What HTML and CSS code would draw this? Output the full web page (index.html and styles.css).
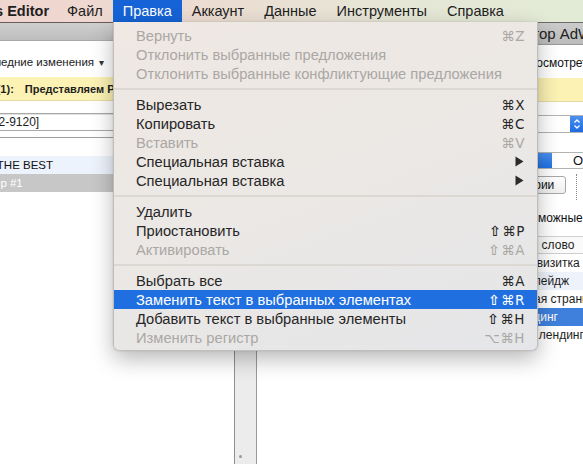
FILE: index.html
```html
<!DOCTYPE html>
<html lang="ru">
<head>
<meta charset="utf-8">
<title>AdWords Editor — Правка</title>
<link rel="stylesheet" href="styles.css">
</head>
<body>
<div class="screen">
  <div class="menubar">
    <span class="app-name">AdWords Editor</span>
    <span class="mb-item">Файл</span>
    <span class="mb-item active">Правка</span>
    <span class="mb-item">Аккаунт</span>
    <span class="mb-item">Данные</span>
    <span class="mb-item">Инструменты</span>
    <span class="mb-item">Справка</span>
  </div>

  <div class="panes">
    <div class="left">
      <div class="l-head"></div>
      <div class="l-changes"><span class="changes-text">Последние изменения</span><span class="caret">▾</span></div>
      <div class="l-notice"><span class="notice-label">Уведомления (1):</span><span class="notice-text">Представляем Редактор AdWords</span></div>
      <div class="l-input"><span class="input-text">Аккаунт [123-452-9120]</span></div>
      <div class="l-rule"></div>
      <div class="l-list">
        <div class="l-row row-alt"><span class="row-text">Кампания THE BEST</span></div>
        <div class="l-row row-sel"><span class="row-text2">Пример #1</span></div>
      </div>
    </div>

    <div class="splitter"><span class="grip"></span></div>

    <div class="right">
      <div class="r-head"><span class="r-title">Редактор AdWords</span></div>
      <div class="r-link"><span>Просмотреть</span></div>
      <div class="r-notice"></div>
      <div class="r-select">
        <span class="select-body"></span>
        <span class="stepper">
          <svg width="8" height="12" viewBox="0 0 8 12"><path d="M1.5 4.5 L4 2 L6.5 4.5 M1.5 7.5 L4 10 L6.5 7.5" fill="none" stroke="#fff" stroke-width="1.3"/></svg>
        </span>
      </div>
      <div class="r-seg">
        <span class="seg-on"></span>
        <span class="seg-off">Ограничения</span>
      </div>
      <div class="r-buttons">
        <span class="r-btn">Категории</span>
        <span class="dots"></span>
      </div>
      <div class="r-hint"><span>Возможные</span><span class="hint-mark">•</span></div>
      <div class="r-table">
        <div class="t-head"><span class="cell c-head">Ключевое слово</span></div>
        <div class="t-row"><span class="cell c1">Сайт-визитка</span></div>
        <div class="t-row t-alt"><span class="cell c2">Лендинг пейдж</span></div>
        <div class="t-row"><span class="cell c3">Целевая страница</span></div>
        <div class="t-row t-sel"><span class="cell c4">Лендинг</span></div>
        <div class="t-row"><span class="cell c5">Мой лендинг</span></div>
      </div>
    </div>
  </div>

  <div class="dropdown">
    <div class="mi disabled"><span class="label">Вернуть</span><span class="key">⌘Z</span></div>
    <div class="mi disabled"><span class="label">Отклонить выбранные предложения</span></div>
    <div class="mi disabled"><span class="label">Отклонить выбранные конфликтующие предложения</span></div>
    <div class="sep"></div>
    <div class="mi"><span class="label">Вырезать</span><span class="key">⌘X</span></div>
    <div class="mi"><span class="label">Копировать</span><span class="key">⌘C</span></div>
    <div class="mi disabled"><span class="label">Вставить</span><span class="key">⌘V</span></div>
    <div class="mi"><span class="label">Специальная вставка</span><span class="arrow"><svg width="9" height="11" viewBox="0 0 9 11"><path d="M0.5 0.5 L8.5 5.5 L0.5 10.5 Z" fill="#2b2b2b"/></svg></span></div>
    <div class="mi"><span class="label">Специальная вставка</span><span class="arrow"><svg width="9" height="11" viewBox="0 0 9 11"><path d="M0.5 0.5 L8.5 5.5 L0.5 10.5 Z" fill="#2b2b2b"/></svg></span></div>
    <div class="sep"></div>
    <div class="mi"><span class="label">Удалить</span></div>
    <div class="mi"><span class="label">Приостановить</span><span class="key"><span class="shift">⇧</span>⌘P</span></div>
    <div class="mi disabled"><span class="label">Активировать</span><span class="key"><span class="shift">⇧</span>⌘A</span></div>
    <div class="sep"></div>
    <div class="mi"><span class="label">Выбрать все</span><span class="key">⌘A</span></div>
    <div class="mi selected"><span class="label">Заменить текст в выбранных элементах</span><span class="key"><span class="shift">⇧</span>⌘R</span></div>
    <div class="mi"><span class="label">Добавить текст в выбранные элементы</span><span class="key"><span class="shift">⇧</span>⌘H</span></div>
    <div class="mi disabled"><span class="label">Изменить регистр</span><span class="key">⌥⌘H</span></div>
  </div>
</div>
</body>
</html>
```
FILE: styles.css
```css
* { box-sizing: border-box; }
html, body { margin: 0; padding: 0; background: #fff; }
body { font-family: "Liberation Sans", Arial, sans-serif; color: #1e1e1e; }

.screen {
  position: relative;
  width: 583px;
  height: 464px;
  overflow: hidden;
  background: #fff;
}

/* ---------- menu bar ---------- */
.menubar {
  height: 22px;
  display: flex;
  align-items: stretch;
  background: linear-gradient(90deg, #f0d5cf 0%, #ecdcd2 35%, #e6e6d6 65%, #e2ebd6 100%);
  font-size: 14.5px;
  line-height: 22px;
  white-space: nowrap;
}
.app-name {
  font-weight: bold;
  font-size: 14.5px;
  margin-left: -61px;
  padding-right: 8px;
  flex-shrink: 0;
}
.mb-item { padding: 0 10px; flex-shrink: 0; }
.mb-item.active { background: #1563d6; color: #fff; }

/* ---------- panes ---------- */
.panes {
  display: flex;
  height: 442px;
}
.left { width: 234px; flex-shrink: 0; overflow: hidden; font-size: 11.5px; }
.splitter {
  width: 23px;
  flex-shrink: 0;
  background: #ececec;
  border-left: 1px solid #8f8f8f;
  border-right: 1px solid #9a9a9a;
  display: flex;
  flex-direction: column;
  justify-content: flex-end;
}
.grip {
  width: 3px; height: 3px; border-radius: 50%;
  background: #9a9a9a;
  margin: 0 0 6px 4px;
}
.right { flex: 1; min-width: 0; overflow: hidden; font-size: 12px; white-space: nowrap; }

/* left pane */
.l-head {
  height: 19px;
  background: linear-gradient(#cfcfcf, #bdbdbd);
  border-top: 1px solid #6b5a5a;
  border-bottom: 1px solid #a9a9a9;
}
.l-changes {
  height: 36px;
  display: flex;
  align-items: center;
  padding-top: 6px;
  white-space: nowrap;
  font-size: 11.5px;
  color: #222;
}
.changes-text { margin-left: -26px; flex-shrink: 0; }
.caret { margin-left: 5px; font-size: 10px; color: #333; }
.l-notice {
  height: 24px;
  background: #fcf2b4;
  border-bottom: 1px solid #e7dca0;
  display: flex;
  align-items: center;
  font-weight: bold;
  white-space: nowrap;
  font-size: 11px;
}
.notice-label { margin-left: -80px; flex-shrink: 0; }
.notice-text { margin-left: 11px; flex-shrink: 0; }
.l-input {
  margin-top: 12px;
  height: 18px;
  border: 1px solid #a8a8a8;
  border-left: 0;
  background: #fff;
  display: flex;
  align-items: center;
  white-space: nowrap;
  font-size: 12px;
  box-shadow: inset 0 1px 0 #e2e2e2;
}
.input-text { margin-left: -89px; flex-shrink: 0; }
.l-rule { margin-top: 6px; height: 1px; background: #9f9f9f; }
.l-list { margin-top: 18px; }
.l-row {
  height: 18px;
  display: flex;
  align-items: center;
  white-space: nowrap;
  font-size: 11.5px;
}
.row-alt { background: #edf3fc; color: #111; }
.row-sel { background: #c7c7c7; color: #fff; }
.row-text { margin-left: -59px; flex-shrink: 0; }
.row-text2 { margin-left: -35px; flex-shrink: 0; }

/* right pane */
.r-head {
  height: 23px;
  background: linear-gradient(#cbcbcb, #bcbcbc);
  border-top: 1px solid #6b6b6b;
  border-bottom: 1px solid #9a9a9a;
  font-size: 15px;
  line-height: 21px;
  color: #222;
  padding-left: 234px;
}
.r-link { height: 33px; padding: 11px 0 0 264px; color: #111; }
.r-notice { height: 24px; background: #fcf2b4; border-bottom: 1px solid #e7dca0; }
.r-select {
  margin: 13px 0 0 180px;
  height: 18px;
  display: flex;
  border: 1px solid #b3b3b3;
  border-right: 0;
  border-radius: 4px 0 0 4px;
  background: #fff;
}
.select-body { flex: 1; }
.stepper {
  width: 13px;
  flex-shrink: 0;
  background: linear-gradient(#4a90f0, #1c6be0);
  display: flex;
  align-items: center;
  justify-content: center;
}
.r-seg {
  margin: 19px 0 0 180px;
  height: 17px;
  display: flex;
  border: 1px solid #b3b3b3;
  border-right: 0;
  background: #fff;
}
.seg-on { width: 114px; flex-shrink: 0; background: linear-gradient(#4a8ff0, #2072e2); }
.seg-off { flex: 1; min-width: 0; padding-left: 21px; font-size: 13px; line-height: 15px; color: #111; }
.r-buttons {
  margin-top: 7px;
  height: 18px;
  display: flex;
  align-items: stretch;
  padding-left: 230px;
}
.r-btn {
  width: 79px;
  flex-shrink: 0;
  border: 1px solid #a7a7a7;
  border-radius: 3px;
  background: linear-gradient(#ffffff, #eeeeee);
  font-size: 12px;
  line-height: 16px;
  padding-left: 10px;
  color: #111;
}
.dots {
  width: 1px;
  height: 26px;
  flex-shrink: 0;
  margin-left: 10px;
  margin-top: -2px;
  border-left: 1px dotted #8a8a8a;
}
.r-hint { height: 34px; padding: 17px 0 0 261px; color: #111; }
.hint-mark { color: #e0a040; margin-left: 4px; font-size: 10px; }
.r-table { margin-top: 8px; }
.t-head {
  height: 18px;
  border-top: 1px solid #cfcfcf;
  border-bottom: 1px solid #cfcfcf;
  background: #fafafa;
  line-height: 16px;
}
.t-row { height: 18px; line-height: 18px; }
.t-alt { background: #eef3fb; }
.t-sel { background: #3f80dc; color: #fff; }
.cell { display: inline-block; }
.c-head { margin-left: 226px; }
.c1 { margin-left: 248px; }
.c2 { margin-left: 228px; }
.c3 { margin-left: 242px; }
.c4 { margin-left: 255px; }
.c5 { margin-left: 255px; }

/* ---------- dropdown menu ---------- */
.dropdown {
  position: absolute;
  left: 113px;
  top: 22px;
  width: 425px;
  padding: 4px 0 3px 0;
  background: linear-gradient(160deg, #efe8e3 0%, #ebe8e5 50%, #e5e6e9 100%);
  border: 1px solid rgba(0, 0, 0, 0.18);
  border-top: 0;
  border-radius: 0 0 6px 6px;
  box-shadow: 0 8px 22px rgba(0, 0, 0, 0.28), 0 0 2px rgba(0, 0, 0, 0.15);
  font-size: 14.7px;
  color: #262626;
}
.mi {
  height: 19px;
  display: flex;
  align-items: center;
  padding: 0 12px 0 22px;
  white-space: nowrap;
}
.mi .label { flex: 1; }
.mi.disabled { color: #aaa7a4; }
.mi.selected { background: #1f6fe0; color: #fff; }
.key { font-family: "DejaVu Sans", sans-serif; font-size: 13.5px; letter-spacing: 0.5px; }
.shift { font-weight: bold; font-size: 14px; margin-right: 1px; }
.arrow { display: flex; align-items: center; padding-right: 1px; }
.sep {
  height: 12px;
  display: flex;
  align-items: center;
}
.sep::before {
  content: "";
  display: block;
  width: 100%;
  height: 2px;
  background: #dcd8d4;
}
```
